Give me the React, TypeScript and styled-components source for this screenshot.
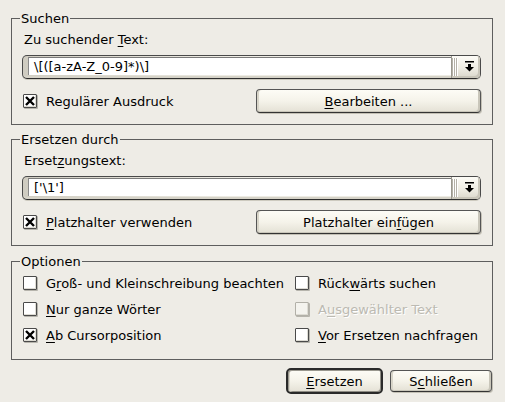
import React from "react";
import styled, { createGlobalStyle, css } from "styled-components";

const BG = "#eeece6";
const FRAME = "#5e5e5e";

const GlobalStyle = createGlobalStyle`
  html, body {
    margin: 0;
    padding: 0;
    background: ${BG};
  }
  body {
    font-family: "DejaVu Sans", "Liberation Sans", sans-serif;
    font-size: 13px;
    color: #000;
  }
`;

const Dialog = styled.div`
  width: 505px;
  height: 402px;
  box-sizing: border-box;
  padding: 11px 12px 0 11px;
  display: flex;
  flex-direction: column;
`;

const GroupBox = styled.fieldset<{ $gap?: number }>`
  margin: ${({ $gap }) => $gap ?? 0}px 0 0 0;
  padding: 0 11px 11px 10px;
  border: 1px solid ${FRAME};
  min-width: 0;
`;

const GroupTitle = styled.legend`
  margin-left: -2px;
  padding: 0 1px;
  line-height: 15px;
`;

const FieldLabel = styled.div`
  margin-top: 6px;
  padding-left: 2px;
  height: 16px;
  line-height: 16px;
`;

const Key = styled.u`
  text-decoration: underline;
  text-underline-offset: 2px;
`;

const ComboBox = styled.div`
  margin-top: 7px;
  height: 24px;
  box-sizing: border-box;
  display: flex;
  border: 1px solid #4a4a4a;
  border-bottom-color: #2e2e2e;
  border-radius: 5px;
  padding: 1px 0 3px 5px;
  background: linear-gradient(to right, #cfccc1, #eeece4 45%);
  box-shadow: 0 1px 0 #cdcabf, inset 0 -2px 0 #d6d3c8;
`;

const ComboInput = styled.div`
  flex: 1;
  background: #fff;
  border-top: 1px solid #7a7a7a;
  border-left: 1px solid #8a8a8a;
  padding-left: 5px;
  line-height: 18px;
  white-space: pre;
`;

const ComboButton = styled.div`
  width: 28px;
  margin: -1px 0 -3px 0;
  display: flex;
  align-items: center;
  border-left: 1px solid #9a988f;
  border-radius: 0 4px 4px 0;
  background: linear-gradient(#fcfbf6, #efede4 55%, #dad7cb);
  box-shadow: inset -2px -2px 0 #c9c6ba;
`;

const Grip = styled.div`
  width: 6px;
  align-self: stretch;
  margin: 2px 0;
  background: repeating-linear-gradient(
    to right,
    #b4b1a7 0 1px,
    #ffffff 1px 2px
  );
`;

const ArrowSlot = styled.div`
  flex: 1;
  display: flex;
  justify-content: center;
  align-items: center;
  padding-bottom: 1px;
`;

const Row = styled.div`
  margin-top: 10px;
  height: 24px;
  display: flex;
  align-items: center;
  justify-content: space-between;
`;

const CheckRow = styled.label<{ $disabled?: boolean }>`
  display: flex;
  align-items: center;
  gap: 9px;
  padding-left: 1px;
  white-space: nowrap;
  ${({ $disabled }) =>
    $disabled &&
    css`
      color: #bcbab2;
      text-shadow: 1px 1px 0 #ffffff;
    `}
`;

const Box = styled.span<{ $disabled?: boolean }>`
  width: 12px;
  height: 12px;
  flex: none;
  display: flex;
  align-items: center;
  justify-content: center;
  border: 1px solid ${({ $disabled }) => ($disabled ? "#b2b0a8" : "#4a4a4a")};
  border-radius: 1px;
  background: ${({ $disabled }) => ($disabled ? "#f4f3ee" : "#fff")};
  box-shadow: inset -1px -1px 0 #dedcd4, 1px 1px 0 #b6b4ac;
`;

const Button = styled.button<{ $width: number; $height?: number; $default?: boolean }>`
  width: ${({ $width }) => $width}px;
  height: ${({ $height }) => $height ?? 24}px;
  padding: 0;
  font: inherit;
  color: #000;
  border: 1px solid #555;
  border-bottom-color: #333;
  border-radius: 4px;
  background: linear-gradient(#fdfcf6, #f5f3ea 50%, #e4e1d5);
  box-shadow: inset 2px 0 0 #d8d5c9, inset -2px -1px 0 #c9c6ba,
    1px 1px 0 #c3c0b5;
  ${({ $default }) =>
    $default &&
    css`
      border: 2px solid #2a2a2a;
      border-radius: 5px;
      box-shadow: inset 1px 1px 0 #9a988f, inset 2px 0 0 #d8d5c9,
        inset -1px -1px 0 #8e8c84;
    `}
`;

const OptionsGrid = styled.div`
  margin-top: 1px;
  display: grid;
  grid-template-columns: 272px 1fr;
  grid-auto-rows: 26px;
  align-items: center;
`;

const Footer = styled.div`
  margin-top: 8px;
  padding-right: 1px;
  display: flex;
  justify-content: flex-end;
  align-items: center;
  gap: 7px;
`;

const Cross = () => (
  <svg width="10" height="10" viewBox="0 0 10 10">
    <path d="M1 1 L9 9 M9 1 L1 9" stroke="#000" strokeWidth="2.4" />
  </svg>
);

const DropArrow = () => (
  <svg width="9" height="11" viewBox="0 0 9 11">
    <rect x="0" y="0" width="9" height="1.5" fill="#000" />
    <rect x="3" y="3" width="3" height="4" fill="#000" />
    <polygon points="0,6 9,6 4.5,10.5" fill="#000" />
  </svg>
);

const Check = ({
  checked,
  disabled,
  children,
}: {
  checked?: boolean;
  disabled?: boolean;
  children: React.ReactNode;
}) => (
  <CheckRow $disabled={disabled}>
    <Box $disabled={disabled}>{checked && <Cross />}</Box>
    <span>{children}</span>
  </CheckRow>
);

const Combo = ({ value }: { value: string }) => (
  <ComboBox>
    <ComboInput>{value}</ComboInput>
    <ComboButton>
      <Grip />
      <ArrowSlot>
        <DropArrow />
      </ArrowSlot>
    </ComboButton>
  </ComboBox>
);

export default function App() {
  return (
    <>
      <GlobalStyle />
      <Dialog>
        <GroupBox>
          <GroupTitle>Suchen</GroupTitle>
          <FieldLabel>
            Zu suchender <Key>T</Key>ext:
          </FieldLabel>
          <Combo value={"\\[([a-zA-Z_0-9]*)\\]"} />
          <Row>
            <Check checked>Regulärer Ausdruck</Check>
            <Button $width={225}>
              <Key>B</Key>earbeiten ...
            </Button>
          </Row>
        </GroupBox>

        <GroupBox $gap={7}>
          <GroupTitle>Ersetzen durch</GroupTitle>
          <FieldLabel>
            Erset<Key>z</Key>ungstext:
          </FieldLabel>
          <Combo value={"['\\1']"} />
          <Row>
            <Check checked>
              <Key>P</Key>latzhalter verwenden
            </Check>
            <Button $width={225}>
              Platzhalter ein<Key>f</Key>ügen
            </Button>
          </Row>
        </GroupBox>

        <GroupBox $gap={8}>
          <GroupTitle>Optionen</GroupTitle>
          <OptionsGrid>
            <Check>
              G<Key>r</Key>oß- und Kleinschreibung beachten
            </Check>
            <Check>
              Rück<Key>w</Key>ärts suchen
            </Check>
            <Check>
              <Key>N</Key>ur ganze Wörter
            </Check>
            <Check disabled>
              A<Key>u</Key>sgewählter Text
            </Check>
            <Check checked>
              <Key>A</Key>b Cursorposition
            </Check>
            <Check>
              <Key>V</Key>or Ersetzen nachfragen
            </Check>
          </OptionsGrid>
        </GroupBox>

        <Footer>
          <Button $width={97} $height={26} $default>
            <Key>E</Key>rsetzen
          </Button>
          <Button $width={102} $height={22}>
            S<Key>c</Key>hließen
          </Button>
        </Footer>
      </Dialog>
    </>
  );
}
